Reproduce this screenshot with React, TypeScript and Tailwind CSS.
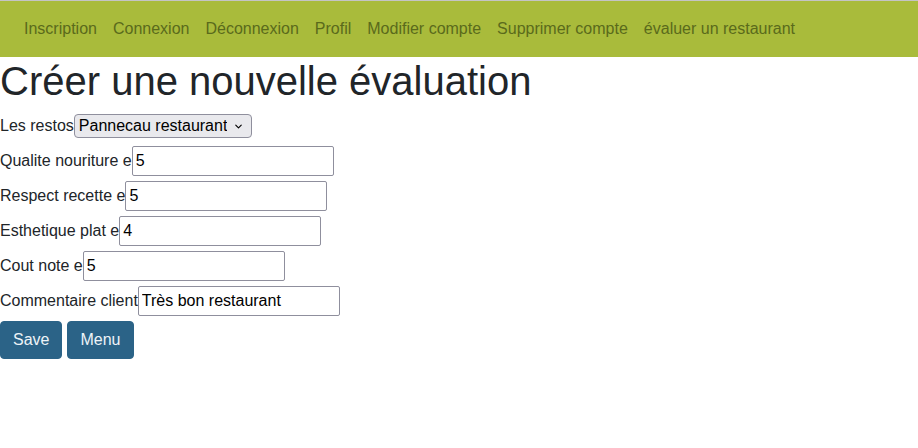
import { ChevronDown } from 'lucide-react';

const links = [
  "Inscription",
  "Connexion",
  "Déconnexion",
  "Profil",
  "Modifier compte",
  "Supprimer compte",
  "évaluer un restaurant",
];

const fields = [
  { label: "Qualite nouriture e", value: "5" },
  { label: "Respect recette e", value: "5" },
  { label: "Esthetique plat e", value: "4" },
  { label: "Cout note e", value: "5" },
  { label: "Commentaire client", value: "Très bon restaurant" },
];

export default function App() {
  return (
    <div className="min-h-screen bg-white text-[#212529] text-base font-['Liberation_Sans',Arial,sans-serif]">
      {/* Navbar */}
      <nav className="border-t border-[#c4c4c4] bg-[#a9bb3b] px-4 py-2 h-[57px] flex items-center">
        <ul className="flex">
          {links.map((link, idx) => (
            <li key={idx}>
              <a href="#" className="block px-2 py-2 leading-6 text-[#5a6a1b]">
                {link}
              </a>
            </li>
          ))}
        </ul>
      </nav>

      <h1 className="text-[40px] leading-[48px] mb-2">Créer une nouvelle évaluation</h1>

      <form className="flex flex-col">
        <div className="flex items-center h-[26px] mb-[7px]">
          <label>Les restos</label>
          <div className="relative">
            <select className="appearance-none h-[24px] w-[178px] bg-[#e9e9ed] border border-[#8f8f9d] rounded-[4px] pl-[4px] pr-6 text-black leading-none">
              <option>Pannecau restaurant</option>
            </select>
            <ChevronDown className="absolute right-[8px] top-[7px] w-[11px] h-[11px] text-black pointer-events-none" strokeWidth={2.5} />
          </div>
        </div>

        {fields.map((field, idx) => (
          <div key={idx} className="flex items-center mb-[5px]">
            <label>{field.label}</label>
            <input
              type="text"
              defaultValue={field.value}
              className="h-[30px] w-[202px] border border-[#8f8f9d] rounded-[2px] px-[3px] text-black"
            />
          </div>
        ))}

        <div className="flex gap-[5px]">
          <button type="button" className="h-[38px] px-3 rounded-[4px] bg-[#2b6387] border border-[#2b6387] text-[#eef3f7] leading-6">
            Save
          </button>
          <button type="button" className="h-[38px] px-3 rounded-[4px] bg-[#2b6387] border border-[#2b6387] text-[#eef3f7] leading-6">
            Menu
          </button>
        </div>
      </form>
    </div>
  );
}
